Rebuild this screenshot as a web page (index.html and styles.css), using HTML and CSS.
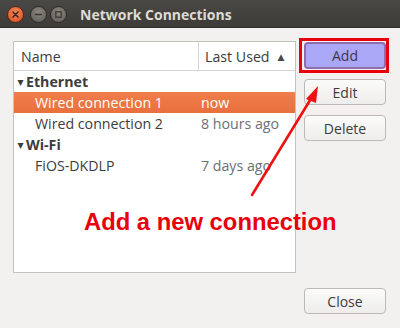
FILE: index.html
```html
<!DOCTYPE html>
<html>
<head>
<meta charset="utf-8">
<link rel="stylesheet" href="styles.css">
</head>
<body>
<div class="window">
  <div class="titlebar">
    <div class="wbtns">
      <span class="wb close"><svg width="15" height="15" viewBox="0 0 15 15"><path d="M5 5 L10 10 M10 5 L5 10" stroke="#3a2a20" stroke-width="1.6" stroke-linecap="round"/></svg></span>
      <span class="wb"><svg width="15" height="15" viewBox="0 0 15 15"><path d="M4.5 7.5 H10.5" stroke="#3a3935" stroke-width="1.6" stroke-linecap="round"/></svg></span>
      <span class="wb"><svg width="15" height="15" viewBox="0 0 15 15"><rect x="4.8" y="4.8" width="5.4" height="5.4" fill="none" stroke="#3a3935" stroke-width="1.3"/></svg></span>
    </div>
    <div class="title">Network Connections</div>
  </div>
  <div class="content">
    <div class="main">
      <div class="list">
        <div class="header">
          <div class="col-name">Name</div>
          <div class="col-used">Last Used <span class="sort">&#9650;</span></div>
        </div>
        <div class="row group"><span class="exp">&#9662;</span>Ethernet</div>
        <div class="row sel"><span class="c1">Wired connection 1</span><span class="c2">now</span></div>
        <div class="row"><span class="c1">Wired connection 2</span><span class="c2">8 hours ago</span></div>
        <div class="row group"><span class="exp">&#9662;</span>Wi-Fi</div>
        <div class="row"><span class="c1">FiOS-DKDLP</span><span class="c2">7 days ago</span></div>
      </div>
      <div class="buttons">
        <button class="btn add">Add</button>
        <button class="btn">Edit</button>
        <button class="btn">Delete</button>
      </div>
    </div>
    <div class="footer">
      <button class="btn">Close</button>
    </div>
  </div>
  <div class="redbox"></div>
  <svg class="arrow" width="400" height="328" viewBox="0 0 400 328">
    <line x1="252" y1="195" x2="312" y2="97" stroke="#ee1111" stroke-width="2.6" stroke-linecap="round"/>
    <polygon points="318,86 306,99 316,103" fill="#ee1111"/>
  </svg>
  <div class="note">Add a new connection</div>
</div>
</body>
</html>
```
FILE: styles.css
```css
html, body {
  margin: 0;
  padding: 0;
}
body {
  width: 400px;
  height: 328px;
  overflow: hidden;
  background: #f2f1f0;
  font-family: "Open Sans", "DejaVu Sans", sans-serif;
  color: #3c3c3c;
}
.window {
  position: relative;
  width: 400px;
  height: 328px;
}
.titlebar {
  height: 28px;
  background: linear-gradient(#4b4945, #3c3b37);
  display: flex;
  align-items: center;
  border-bottom: 1px solid #2f2e2a;
  box-sizing: border-box;
}
.wbtns {
  display: flex;
  gap: 3px;
  padding-left: 7px;
  padding-top: 2px;
}
.wb {
  width: 15px;
  height: 15px;
  border-radius: 50%;
  background: radial-gradient(circle at 50% 35%, #8a8780, #5d5b55);
  border: 1px solid #2c2b28;
  display: flex;
}
.wb.close {
  background: radial-gradient(circle at 50% 35%, #f4845a, #df4d1e);
  border-color: #4a2a1a;
  margin-right: 3px;
}
.title {
  margin-left: 13px;
  font-family: "Open Sans", "DejaVu Sans", sans-serif;
  font-weight: bold;
  font-size: 14px;
  color: #dfdbd2;
  padding-top: 2px;
}
.content {
  padding: 13px 14px 0 13px;
}
.main {
  display: flex;
  gap: 8px;
}
.list {
  width: 283px;
  height: 232px;
  box-sizing: border-box;
  background: #fff;
  border: 1px solid #c4c2bf;
  font-size: 14.2px;
}
.header {
  display: flex;
  height: 28px;
  border-bottom: 1px solid #d6d4d1;
  align-items: stretch;
}
.col-name {
  width: 185px;
  box-sizing: border-box;
  padding-left: 7px;
  border-right: 1px solid #d6d4d1;
  display: flex;
  align-items: center;
}
.col-used {
  padding-left: 6px;
  display: flex;
  align-items: center;
}
.sort {
  font-size: 9px;
  margin-left: 8px;
  color: #4a4a4a;
}
.row {
  height: 21px;
  display: flex;
  align-items: center;
}
.group {
  font-weight: bold;
  padding-left: 1px;
}
.exp {
  font-size: 12px;
  width: 11px;
  display: inline-block;
  text-align: center;
}
.c1 {
  width: 166px;
  padding-left: 21px;
}
.c2 {
  color: #6b7077;
}
.sel {
  background: linear-gradient(#f07d4b, #e8703e);
  color: #fff;
}
.sel .c2 {
  color: #fff;
}
.buttons {
  display: flex;
  flex-direction: column;
  gap: 10px;
  padding-top: 1px;
}
.btn {
  width: 82px;
  height: 26px;
  box-sizing: border-box;
  border: 1px solid #bdbab5;
  border-radius: 4px;
  background: linear-gradient(#fbfbfa, #eeedeb);
  font-family: "Open Sans", "DejaVu Sans", sans-serif;
  font-size: 14px;
  color: #3c3c3c;
  padding: 0;
}
.btn.add {
  background: #aaa7f7;
  border: 2px solid #8f6eb0;
  color: #3a3a4a;
  height: 27px;
}
.footer {
  display: flex;
  justify-content: flex-end;
  padding-top: 15px;
}
.redbox {
  position: absolute;
  left: 299px;
  top: 38px;
  width: 84px;
  height: 29px;
  border: 3px solid #e8000c;
}
.arrow {
  position: absolute;
  left: 0;
  top: 0;
}
.note {
  position: absolute;
  left: 84px;
  top: 208px;
  font-family: "Liberation Sans", Arial, sans-serif;
  font-weight: bold;
  font-size: 23.8px;
  color: #e8000c;
  white-space: nowrap;
}
```
